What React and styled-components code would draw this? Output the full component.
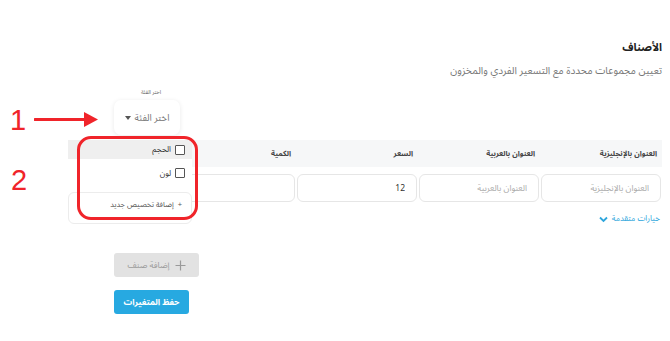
import React from "react";
import styled, { createGlobalStyle } from "styled-components";

const GlobalStyle = createGlobalStyle`
  html, body {
    margin: 0;
    padding: 0;
    background: #fff;
  }
  body {
    font-family: "Noto Sans Arabic", "Noto Kufi Arabic", "DejaVu Sans", "Noto Sans", sans-serif;
    color: #333;
  }
`;

const Page = styled.div`
  position: relative;
  width: 670px;
  height: 341px;
  overflow: hidden;
  box-sizing: border-box;
  padding: 39px 8px 0 68px;
`;

const Content = styled.div`
  direction: rtl;
  display: flex;
  flex-direction: column;
`;

const Title = styled.h2`
  margin: 0;
  font-size: 11px;
  line-height: 18px;
  font-weight: bold;
  color: #222;
`;

const Subtitle = styled.p`
  margin: 5px 0 0;
  font-size: 10.2px;
  line-height: 18px;
  color: #777;
`;

const SelectGroup = styled.div`
  align-self: flex-end;
  margin: 7px 0 0 46px;
  width: 66px;
  display: flex;
  flex-direction: column;
  align-items: center;
`;

const TinyLabel = styled.span`
  font-size: 5.5px;
  line-height: 10px;
  color: #666;
  padding-left: 8px;
`;

const SelectBox = styled.div`
  margin-top: 3px;
  width: 66px;
  height: 35px;
  box-sizing: border-box;
  border-radius: 7px;
  background: #fff;
  box-shadow: 0 1px 5px rgba(0, 0, 0, 0.09);
  display: flex;
  align-items: center;
  justify-content: center;
  gap: 4px;
  font-size: 9.5px;
  color: #777;
`;

const Caret = styled.span`
  width: 0;
  height: 0;
  border-left: 3.5px solid transparent;
  border-right: 3.5px solid transparent;
  border-top: 4px solid #555;
`;

const TableWrap = styled.div`
  position: relative;
  margin-top: 5px;
`;

const Grid = styled.div`
  display: grid;
  grid-template-columns: 122px 122px 122px 122px 1fr;
`;

const HeadCell = styled.div`
  height: 27px;
  background: #f6f7f8;
  display: flex;
  align-items: center;
  padding-right: 5px;
  font-size: 7.5px;
  font-weight: bold;
  color: #444;
`;

const BodyCell = styled.div`
  padding: 7px 1px 5px;
`;

const Input = styled.input`
  display: block;
  width: 100%;
  height: 28px;
  box-sizing: border-box;
  border: 1px solid #e6e6e6;
  border-radius: 6px;
  padding: 0 11px;
  font-family: inherit;
  font-size: 8.5px;
  color: #333;
  direction: rtl;
  outline: none;
  &::placeholder {
    color: #aaa;
  }
`;

const AdvancedLink = styled.a`
  margin-top: 6px;
  align-self: flex-start;
  display: flex;
  align-items: center;
  gap: 4px;
  font-size: 8px;
  line-height: 12px;
  color: #2ea6dc;
  padding-right: 2px;
`;

const Button = styled.button`
  align-self: flex-end;
  margin-left: 46px;
  margin-top: ${(p) => p.$top}px;
  width: ${(p) => p.$w}px;
  height: 24px;
  border: none;
  border-radius: 3px;
  display: flex;
  align-items: center;
  justify-content: center;
  gap: 5px;
  white-space: nowrap;
  font-family: inherit;
  font-size: 8.5px;
  font-weight: ${(p) => (p.$primary ? "bold" : "normal")};
  background: ${(p) => (p.$primary ? "#27a9e1" : "#e2e2e2")};
  color: ${(p) => (p.$primary ? "#fff" : "#9a9a9a")};
  direction: rtl;
`;

const Menu = styled.div`
  position: absolute;
  left: 0;
  top: 0;
  width: 124px;
  background: #fff;
  direction: rtl;
`;

const MenuItem = styled.div`
  height: ${(p) => p.$h}px;
  margin-bottom: ${(p) => p.$mb || 0}px;
  background: ${(p) => (p.$active ? "#efefef" : "transparent")};
  display: flex;
  align-items: center;
  gap: 4px;
  padding-right: 7px;
  font-size: 8px;
  color: #333;
`;

const Check = styled.span`
  width: 8px;
  height: 8px;
  border: 1px solid #555;
  border-radius: 1px;
  background: #fff;
`;

const MenuFooter = styled.div`
  margin-top: 9px;
  height: 32px;
  box-sizing: border-box;
  border: 1px solid #ececec;
  border-radius: 6px;
  display: flex;
  align-items: center;
  gap: 4px;
  padding: 0 9px 6px 0;
  font-size: 7.5px;
  color: #555;
`;

const Highlight = styled.div`
  position: absolute;
  left: 77px;
  top: 136px;
  width: 121px;
  height: 84px;
  box-sizing: border-box;
  border: 3px solid #f0242a;
  border-radius: 14px;
  pointer-events: none;
`;

const Marker = styled.span`
  position: absolute;
  left: ${(p) => p.$x}px;
  top: ${(p) => p.$y}px;
  font-family: "Liberation Sans", sans-serif;
  font-size: 29px;
  font-weight: 300;
  line-height: 1;
  color: #f0242a;
`;

const Arrow = styled.svg`
  position: absolute;
  left: 34px;
  top: 110px;
`;

const columns = [
  { head: "العنوان بالإنجليزية", placeholder: "العنوان بالإنجليزية" },
  { head: "العنوان بالعربية", placeholder: "العنوان بالعربية" },
  { head: "السعر", value: "12" },
  { head: "الكمية" },
  { head: "" },
];

export default function App() {
  return (
    <>
      <GlobalStyle />
      <Page>
        <Content>
          <Title>الأصناف</Title>
          <Subtitle>تعيين مجموعات محددة مع التسعير الفردي والمخزون</Subtitle>

          <SelectGroup>
            <TinyLabel>اختر الفئة</TinyLabel>
            <SelectBox>
              <span>اختر الفئة</span>
              <Caret />
            </SelectBox>
          </SelectGroup>

          <TableWrap>
            <Grid>
              {columns.map((c, i) => (
                <HeadCell key={"h" + i}>{c.head}</HeadCell>
              ))}
              {columns.map((c, i) => (
                <BodyCell key={"b" + i}>
                  <Input
                    placeholder={c.placeholder || ""}
                    defaultValue={c.value || ""}
                  />
                </BodyCell>
              ))}
            </Grid>
            <Menu>
              <MenuItem $h={19} $mb={4} $active>
                <Check />
                الحجم
              </MenuItem>
              <MenuItem $h={20}>
                <Check />
                لون
              </MenuItem>
              <MenuFooter>
                <span>+</span>
                إضافة تخصيص جديد
              </MenuFooter>
            </Menu>
          </TableWrap>

          <AdvancedLink>
            خيارات متقدمة
            <svg width="9" height="7" viewBox="0 0 9 7">
              <path d="M1 1.5 L4.5 5 L8 1.5" fill="none" stroke="#2ea6dc" strokeWidth="1.8" />
            </svg>
          </AdvancedLink>

          <Button $top={28} $w={85}>
            <svg width="11" height="11" viewBox="0 0 11 11">
              <path d="M5.5 0.5 V10.5 M0.5 5.5 H10.5" stroke="#999" strokeWidth="1.2" />
            </svg>
            إضافة صنف
          </Button>
          <Button $top={13} $w={75} $primary>
            حفظ المتغيرات
          </Button>
        </Content>

        <Highlight />
        <Marker $x={10} $y={106}>1</Marker>
        <Marker $x={11} $y={166}>2</Marker>
        <Arrow width="66" height="20" viewBox="0 0 66 20">
          <path d="M1 9.5 H52" stroke="#f0242a" strokeWidth="3" strokeLinecap="round" />
          <path d="M50 2 L64 9.5 L50 17 Z" fill="#f0242a" />
        </Arrow>
      </Page>
    </>
  );
}
